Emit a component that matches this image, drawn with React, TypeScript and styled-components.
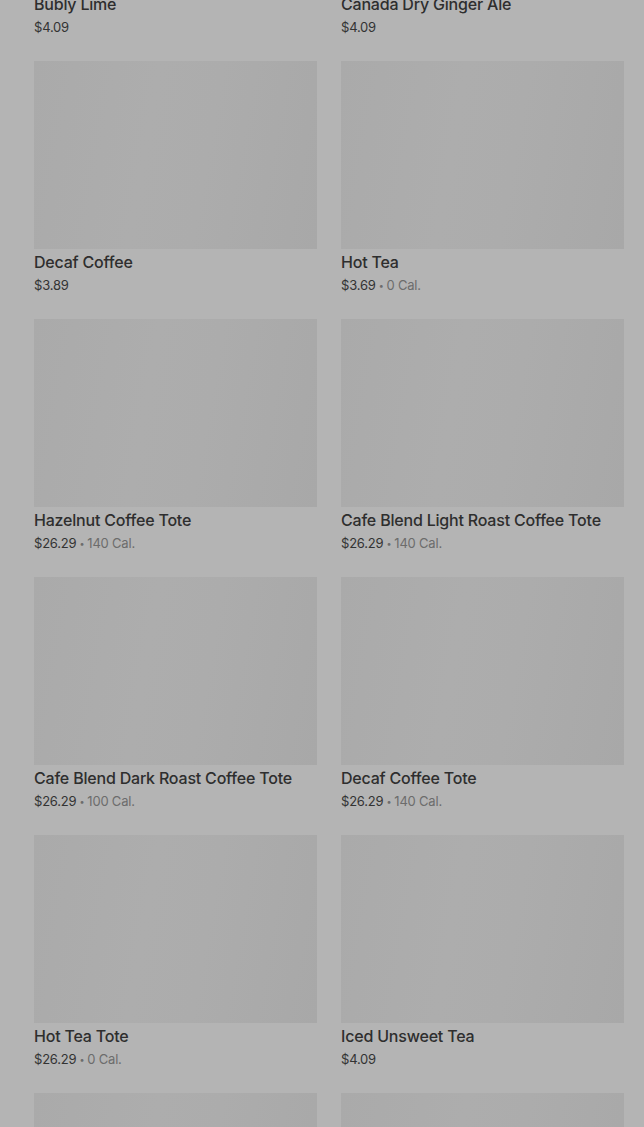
import styled, { createGlobalStyle } from 'styled-components';

type Item = { name: string; price: string; cal?: string };

const items: Item[] = [
  { name: 'Bubly Lime', price: '$4.09' },
  { name: 'Canada Dry Ginger Ale', price: '$4.09' },
  { name: 'Decaf Coffee', price: '$3.89' },
  { name: 'Hot Tea', price: '$3.69', cal: '0 Cal.' },
  { name: 'Hazelnut Coffee Tote', price: '$26.29', cal: '140 Cal.' },
  { name: 'Cafe Blend Light Roast Coffee Tote', price: '$26.29', cal: '140 Cal.' },
  { name: 'Cafe Blend Dark Roast Coffee Tote', price: '$26.29', cal: '100 Cal.' },
  { name: 'Decaf Coffee Tote', price: '$26.29', cal: '140 Cal.' },
  { name: 'Hot Tea Tote', price: '$26.29', cal: '0 Cal.' },
  { name: 'Iced Unsweet Tea', price: '$4.09' },
  { name: 'Sweet Tea', price: '$4.09' },
  { name: 'Lemonade', price: '$4.09' },
];

export default function App() {
  return (
    <>
      <GlobalStyle />
      <Page>
        <Grid>
          {items.map((item) => (
            <Card key={item.name}>
              <Thumb />
              <Title>{item.name}</Title>
              <Meta>
                {item.price}
                {item.cal && (
                  <Cal>
                    <Dot>•</Dot>
                    {item.cal}
                  </Cal>
                )}
              </Meta>
            </Card>
          ))}
        </Grid>
      </Page>
    </>
  );
}

const GlobalStyle = createGlobalStyle`
  html, body {
    margin: 0;
    padding: 0;
    background: #b4b4b4;
    overflow: hidden;
  }
`;

const Page = styled.main`
  height: 1127px;
  overflow: hidden;
  box-sizing: border-box;
  padding: 0 20px 0 34px;
  font-family: Inter, "Noto Sans", Arial, sans-serif;
`;

const Grid = styled.section`
  display: grid;
  grid-template-columns: 283px 283px;
  column-gap: 24px;
  row-gap: 24px;
  margin-top: -197px;
`;

const Card = styled.article`
  display: flex;
  flex-direction: column;
`;

const Thumb = styled.div`
  height: 188px;
  background: linear-gradient(100deg, #aaaaaa 0%, #adadad 40%, #acacac 60%, #a8a8a8 100%);
`;

const Title = styled.div`
  margin-top: 1px;
  font-size: 16px;
  line-height: 24px;
  font-weight: 500;
  letter-spacing: -0.2px;
  color: #2e2e2e;
  white-space: nowrap;
`;

const Meta = styled.div`
  margin-top: 2px;
  height: 19px;
  font-size: 13px;
  line-height: 19px;
  letter-spacing: -0.2px;
  color: #333333;
`;

const Cal = styled.span`
  color: #6c6c6c;
`;

const Dot = styled.span`
  display: inline-block;
  margin: 0 3px;
  font-size: 9px;
  line-height: 0;
  vertical-align: 1px;
`;
